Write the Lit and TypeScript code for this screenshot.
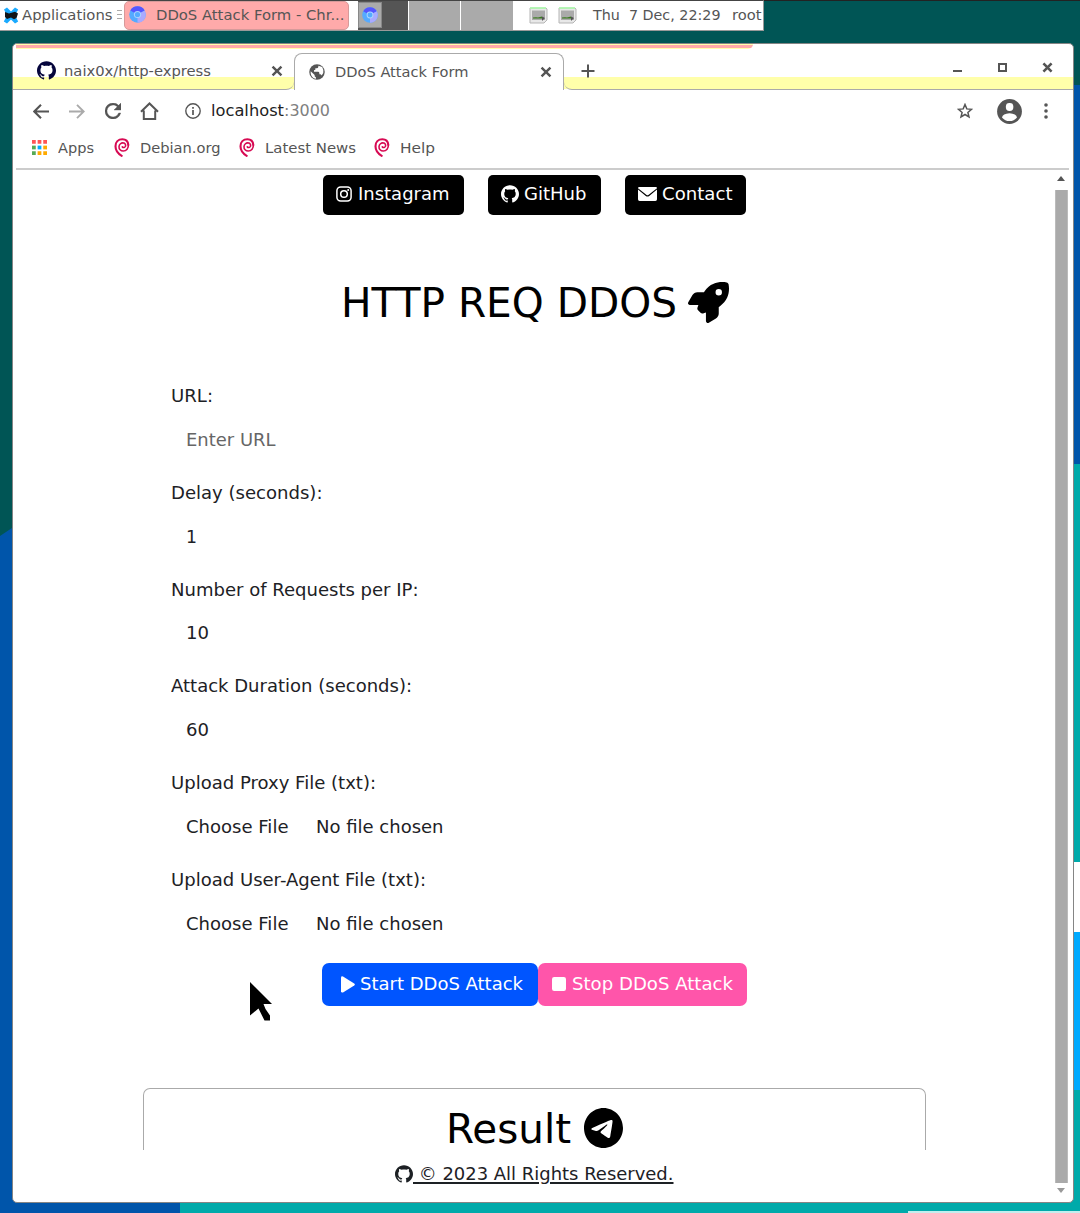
import { LitElement, html, css, svg } from "lit";
import { customElement, property, state } from "lit/decorators.js";

/** A run of text that is stretched horizontally to an exact advance width. */
@customElement("fit-text")
class FitText extends LitElement {
  static styles = css`
    :host { display: block; white-space: pre; }
    .run { display: inline-block; transform-origin: 0 50%; white-space: pre; }
    .underlined { text-decoration: underline; text-decoration-thickness: 1.5px; text-underline-offset: 1.5px; }
  `;
  @property({ type: Number }) w = 0;
  @property() text = "";
  @property({ type: Boolean }) underlined = false;
  @state() private scale = 1;

  firstUpdated() {
    const run = this.renderRoot.querySelector(".run") as HTMLElement;
    const natural = run.getBoundingClientRect().width;
    if (natural > 0 && this.w > 0) this.scale = this.w / natural;
  }

  render() {
    return html`<span class="run ${this.underlined ? "underlined" : ""}" style="transform: scaleX(${this.scale})">${this.text}</span>`;
  }
}

const t = (text: string, w: number, cls = "") => html`<fit-text class=${cls} .text=${text} .w=${w}></fit-text>`;

const GITHUB =
  "M12 .297c-6.63 0-12 5.373-12 12 0 5.303 3.438 9.8 8.205 11.385.6.113.82-.258.82-.577 0-.285-.01-1.04-.015-2.04-3.338.724-4.042-1.61-4.042-1.61C4.422 18.07 3.633 17.7 3.633 17.7c-1.087-.744.084-.729.084-.729 1.205.084 1.838 1.236 1.838 1.236 1.07 1.835 2.809 1.305 3.495.998.108-.776.417-1.305.76-1.605-2.665-.3-5.466-1.332-5.466-5.93 0-1.31.465-2.38 1.235-3.22-.135-.303-.54-1.523.105-3.176 0 0 1.005-.322 3.3 1.23.96-.267 1.98-.399 3-.405 1.02.006 2.04.138 3 .405 2.28-1.552 3.285-1.23 3.285-1.23.645 1.653.24 2.873.12 3.176.765.84 1.23 1.91 1.23 3.22 0 4.61-2.805 5.625-5.475 5.92.42.36.81 1.096.81 2.22 0 1.606-.015 2.896-.015 3.286 0 .315.21.69.825.57C20.565 22.092 24 17.592 24 12.297c0-6.627-5.373-12-12-12";
const ROCKET =
  "M156.6 384.9L125.7 354c-8.5-8.5-11.5-20.8-7.7-32.2c3-8.9 7-20.5 11.8-33.8L24 288c-8.6 0-16.6-4.6-20.9-12.1s-4.2-16.7 .2-24.1l52.5-88.5c13-21.9 36.5-35.3 61.9-35.3l82.3 0c2.4-4 4.8-7.7 7.2-11.3C289.1-4.1 411.1-8.1 483.9 5.3c11.6 2.1 20.6 11.2 22.8 22.8c13.4 72.9 9.3 194.8-111.4 276.7c-3.5 2.4-7.3 4.8-11.3 7.2v82.3c0 25.4-13.4 49-35.3 61.9l-88.5 52.5c-7.4 4.4-16.6 4.5-24.1 .2s-12.1-12.2-12.1-20.9V380.8c-14.1 4.9-26.4 8.9-35.7 11.9c-11.2 3.6-23.4 .5-31.8-7.8zM384 168a40 40 0 1 0 0-80 40 40 0 1 0 0 80z";
const TELEGRAM =
  "M248,8C111.033,8,0,119.033,0,256S111.033,504,248,504,496,392.967,496,256,384.967,8,248,8ZM362.952,176.66c-3.732,39.215-19.881,134.378-28.1,178.3-3.476,18.584-10.322,24.816-16.948,25.425-14.4,1.326-25.338-9.517-39.287-18.661-21.827-14.308-34.158-23.215-55.346-37.177-24.485-16.135-8.612-25,5.342-39.5,3.652-3.793,67.107-61.51,68.335-66.746.153-.655.3-3.1-1.154-4.384s-3.59-.849-5.135-.5q-3.283.746-104.608,69.142-14.845,10.194-26.894,9.934c-8.855-.191-25.888-5.006-38.551-9.123-15.531-5.048-27.875-7.717-26.8-16.291q.84-6.7,18.45-13.7,108.446-47.248,144.628-62.3c68.872-28.647,83.183-33.623,92.511-33.789,2.052-.034,6.639.474,9.61,2.885a10.452,10.452,0,0,1,3.53,6.716A43.765,43.765,0,0,1,362.952,176.66Z";

const icon = (w: number, h: number, viewBox: string, body: unknown) =>
  html`<svg width=${w} height=${h} viewBox=${viewBox} preserveAspectRatio="none">${body}</svg>`;

const github = (s: number) => icon(s, s, "0 0 24 24.3", svg`<path fill="currentColor" d=${GITHUB} />`);

const instagram = icon(16, 16, "0 0 16 16", svg`
  <g fill="none" stroke="currentColor" stroke-width="1.5">
    <rect x=".9" y=".9" width="14.2" height="14.2" rx="3.8" /><circle cx="8" cy="8" r="3.3" />
  </g><circle cx="12.2" cy="3.9" r="1" fill="currentColor" />`);

const envelope = icon(19, 14, "0 0 19 14", svg`
  <path fill="currentColor" d="M1.2 0h16.6Q19 .1 19 1.3L10.4 8q-.9.6-1.8 0L0 1.3Q0 .1 1.2 0z" />
  <path fill="currentColor" d="M0 2.6l7.8 6.4q1.7 1.2 3.400 0L19 2.600v9.700q0 1.7-1.6 1.7H1.6Q0 14 0 12.3z" />`);

const play = icon(14, 17, "0 0 14 17", svg`<path fill="currentColor" d="M0 1.6Q.2-.2 2 .5l11.2 6.9q1.3 1 0 2.1L2 16.4q-1.800.7-2-1.200z" />`);
const stop = icon(14, 14, "0 0 14 14", svg`<rect width="14" height="14" rx="2.2" fill="currentColor" />`);

const debian = icon(16, 19, "0 0 16 19", svg`
  <g fill="none" stroke="#d70a53" stroke-linecap="round">
    <path stroke-width="2.1" d="M14.3 6.800C13.900 3.200 11.600 1.300 8.400 1.300 4.200 1.300 1.500 4.200 1.500 8.300c0 4 2.200 7.200 6.200 9.500" />
    <path stroke-width="1.600" d="M14.300 6.800c.4 3.400-2 6.200-5 6.200-2.600 0-4.500-1.900-4.300-4.400.2-2.400 2.200-4 4.300-3.700 1.800.2 2.700 1.900 2.200 3.300-.5 1.300-2.300 1.700-3.200.7" />
  </g>`);

const chromium = (s: number) => icon(s, s, "0 0 17 17", svg`
  <circle cx="8.5" cy="8.5" r="8.3" fill="#55aaff" />
  <path d="M8.5 8.5L1.3 4.4A8.3 8.3 0 0 1 15.7 4.4z" fill="#5555ff" />
  <path d="M8.5 8.5L15.7 4.4A8.3 8.3 0 0 1 8.5 16.8z" fill="#aaaaff" />
  <circle cx="8.5" cy="8.5" r="3.6" fill="#aad4ff" /><circle cx="8.5" cy="8.5" r="2.6" fill="#55aaff" />`);

const mouseLogo = icon(16, 17, "0 0 16 17", svg`
  <path d="M1 2.500l3-2 4 4 4-4 3.200 2-3.200 6 3.200 6-3.200 2-4-4-4 4-3.200-2 3.200-6z" fill="#19aaff" />
  <path d="M2 5l4 1.400 6-1.600 3 1.700-1.500 4.500-2.500 1.200-3-1.600-4 1.400-2-2z" fill="#101418" />`);

const monitor = icon(19, 17, "0 0 19 17", svg`
  <path d="M1 1h16l1 1v11l-3 3H1z" fill="#e8e8e8" stroke="#b5b5b5" />
  <path d="M1 1h16" stroke="#aaffaa" stroke-width="1.5" />
  <rect x="3" y="3.5" width="13" height="9.500" fill="#aaa" />
  <path d="M4 10.500l3-.3 2 .2 4-1v2.200H4z" fill="#397a1e" /><path d="M13 9.500l3 1.500-3 3z" fill="#555" />`);

const cross = (s: number, sw: number) =>
  icon(s, s, "0 0 10 10", svg`<path d="M1.3 1.3l7.400 7.400M8.700 1.300L1.300 8.700" stroke="#555" stroke-width=${sw} />`);

const plus = icon(14, 14, "0 0 14 14", svg`<path d="M7 .5v13M.5 7h13" stroke="#555" stroke-width="2" />`);
const globe = icon(16, 16, "0 0 24 24", svg`
  <circle cx="12" cy="12" r="11.6" fill="#555" />
  <path fill="#fff" d="M2.5 11l6 5.500v2l2 1.800v1.800C5 21.500 2 17 2.500 11zM14 2.500v2q-.4 2-2.500 2h-2v2.300l-2 .5v2.200h6.500q1.500.4 1.500 2v2h1.600q1.400.3 1.900 1.800Q22.600 13 21.500 9L19.800 4.500z" />`);

const arrow = icon(16, 15, "0 0 16 15", svg`<path d="M16 7.5H1.5M8 .8L1.3 7.5 8 14.2" fill="none" stroke="#555" stroke-width="2.100" />`);
const arrowRight = icon(16, 15, "0 0 16 15", svg`<path d="M0 7.5h14.500M8 .8l6.700 6.700L8 14.2" fill="none" stroke="#aaa" stroke-width="1.9" />`);
const reload = icon(16, 16, "4 4 16 16", svg`<path fill="#555" stroke="#555" stroke-width=".4" d="M17.650 6.350A7.960 7.960 0 0 0 12 4a8 8 0 1 0 7.730 10h-2.080A6 6 0 1 1 12 6c1.660 0 3.140.69 4.220 1.780L13 11h7V4z" />`);
const home = icon(19, 18, "0 0 19 18", svg`<path d="M1 9.800L9.500 1.500 18 9.800M3.800 8.500v8.500h11.400V8.500" fill="none" stroke="#555" stroke-width="2" />`);
const info = icon(16, 16, "0 0 16 16", svg`<circle cx="8" cy="8" r="7.200" fill="none" stroke="#555" stroke-width="1.4" /><path d="M8 7v5M8 4v1.700" stroke="#555" stroke-width="1.700" />`);
const star = icon(16, 16, "0 0 16 16", svg`<path d="M8 1.500l1.800 4.400 4.700.4-3.600 3.100 1.100 4.600L8 11.500 4 14l1.100-4.600L1.500 6.300l4.700-.4z" fill="none" stroke="#555" stroke-width="1.5" />`);
const avatar = icon(25, 25, "0 0 25 25", svg`
  <circle cx="12.500" cy="12.500" r="12.400" fill="#555" />
  <rect x="8.900" y="4" width="7.400" height="8" rx="3.400" fill="#fff" />
  <path d="M5 18.400q.7-3.900 7.500-4.200 6.800.3 7.500 4.200-3 3.700-7.500 3.700T5 18.400z" fill="#fff" />`);
const dots = icon(4, 16, "0 0 4 16", svg`<g fill="#555"><circle cx="2" cy="2" r="1.800" /><circle cx="2" cy="8" r="1.800" /><circle cx="2" cy="14" r="1.800" /></g>`);
const apps = icon(15, 15, "0 0 16 16", svg`
  <g fill="#f55"><rect width="4" height="4" /><rect x="6" width="4" height="4" /><rect x="12" width="4" height="4" /></g>
  <g fill="#5a5"><rect y="6" width="4" height="4" /><rect y="12" width="4" height="4" /></g>
  <rect x="6" y="6" width="4" height="4" fill="#0af" />
  <g fill="#fa0"><rect x="12" y="6" width="4" height="4" /><rect x="6" y="12" width="4" height="4" /><rect x="12" y="12" width="4" height="4" /></g>`);

interface Field {
  label: string;
  labelW: number;
  value: string;
  valueW: number;
  kind: "placeholder" | "value" | "file";
}

const FIELDS: Field[] = [
  { label: "URL:", labelW: 42, value: "Enter URL", valueW: 89.5, kind: "placeholder" },
  { label: "Delay (seconds):", labelW: 151.5, value: "1", valueW: 11, kind: "value" },
  { label: "Number of Requests per IP:", labelW: 247.5, value: "10", valueW: 23, kind: "value" },
  { label: "Attack Duration (seconds):", labelW: 241, value: "60", valueW: 23, kind: "value" },
  { label: "Upload Proxy File (txt):", labelW: 205, value: "", valueW: 0, kind: "file" },
  { label: "Upload User-Agent File (txt):", labelW: 255, value: "", valueW: 0, kind: "file" },
];

@customElement("app-root")
class AppRoot extends LitElement {
  static styles = css`
    :host {
      display: block; position: relative; width: 1080px; height: 1213px; overflow: hidden;
      font-family: "DejaVu Sans", sans-serif; font-size: 16.9px; line-height: 24px; color: #1d2125;
    }
    * { box-sizing: border-box; }
    svg { display: block; flex: none; }
    .wallpaper { position: absolute; inset: 0; }
    .desktop { position: relative; display: flex; flex-direction: column; height: 1213px; }

    .panel {
      display: grid; align-items: center; width: 764px; height: 31px; padding-top: 1px;
      grid-template-columns: 3px 19px 95px 7px 225px 9px 155px 16px 29px 35px 139px 32px;
      background: #fff; border-top: 1px solid #444; border-bottom: 1px solid #999; border-right: 1px solid #999;
      font-size: 14px; line-height: 20px; color: #555;
    }
    .panel > svg { margin-top: -2px; }
    .panel > fit-text { margin-top: -3px; }
    .grip { width: 5px; height: 12px; margin-top: -1px; background: repeating-linear-gradient(#aaa 0 1px, transparent 1px 4px); }
    .task {
      display: flex; align-items: center; gap: 10px; height: 29px; margin-top: -2px; padding: 0 0 1px 4px;
      background: #ffaaaa; border: 1px solid #d69a9a; border-radius: 5px;
    }
    .pager { display: grid; grid-template-columns: 50px 51px 52px; gap: 1px; height: 29px; margin-top: -1px; }
    .desk { background: #aaa; }
    .desk.active { background: #555; padding: 1px 0 1px 0; }
    .mini { width: 24px; height: 26px; display: flex; align-items: center; justify-content: center; background: #aaa; border: 1px solid #888; }

    .window {
      width: 1062px; height: 1160px; margin: 12px 0 0 12px; display: flex; flex-direction: column;
      background: #fff; border: 1px solid #858585; border-radius: 5px; overflow: hidden; position: relative;
    }
    .accent { height: 5px; width: 737px; margin-left: 3px; background: linear-gradient(#ffffaa 0 1px, #ffaaaa 1px 3.500px, #ffffaa 3.500px 5px); border-radius: 0 0 16px 0; flex: none; }
    .tabs {
      display: grid; grid-template-columns: 281px 270px 1fr auto; height: 42px; flex: none;
      background: linear-gradient(#fff 0 28px, #ffffaa 28px 40px, transparent 40px);
      font-size: 13.9px; line-height: 20px; color: #555;
    }
    .tab { display: grid; align-items: center; }
    .tab.idle {
      grid-template-columns: 27px 207px 1fr; padding: 3px 0 0 24px; height: 41px;
      border-bottom: 1px solid #aaa; border-bottom-right-radius: 8px;
    }
    .tab.idle svg { color: #05053c; }
    .tab.current {
      grid-template-columns: 25.500px 205.500px 1fr; padding: 0 0 1px 14px; height: 37px; margin-top: 4px; background: #fff;
      border: 1px solid #aaa; border-bottom: 0; border-radius: 8px 8px 0 0;
    }
    .rest { display: flex; align-items: center; padding-left: 17px; height: 41px; padding-top: 3px; border-bottom: 1px solid #aaa; border-bottom-left-radius: 8px; }
    .controls { display: grid; grid-template-columns: 45px 44.500px 31px; align-items: center; height: 41px; padding-bottom: 3px; border-bottom: 1px solid #aaa; }
    .min { width: 9px; height: 2px; margin-top: 7px; background: #555; }
    .max { width: 9px; height: 9px; border: 2px solid #555; }

    .toolbar {
      display: grid; align-items: center; height: 40px; flex: none; padding-left: 19.500px;
      grid-template-columns: 36px 36px 35px 45.500px 25.500px 73px 1fr 40.500px 46.500px 29.500px;
      font-size: 15.3px; line-height: 20px; color: #222;
    }
    .dim { color: #808080; }
    .bookmarks {
      display: grid; align-items: center; height: 39px; flex: none; padding: 0 0 4px 16px; margin: 0 4px 0 3px;
      grid-template-columns: 26px 56px 25.500px 99px 26px 109px 26.500px 1fr;
      border-bottom: 2px solid #ccc;
      font-size: 13.9px; line-height: 20px; color: #555;
    }

    .view { display: grid; grid-template-columns: 1fr 14px; flex: 1; padding-right: 5px; min-height: 0; }
    .page { display: flex; flex-direction: column; min-width: 0; }
    .links { display: grid; grid-template-columns: 141px 113px 121px; gap: 24px; padding: 4.500px 0 0 310px; }
    .link { display: grid; grid-template-columns: 21.500px 1fr; align-items: center; height: 40.500px; padding: 0 0 1px 13px; background: #000; color: #fff; border-radius: 5px; }
    .link.git { grid-template-columns: 23px 1fr; }
    .link.mail { grid-template-columns: 23.500px 1fr; }
    .title { display: grid; grid-template-columns: 347px 42px; align-items: center; height: 50px; margin: 62px 0 0 328px; font-size: 40.500px; line-height: 50px; color: #000; }
    .title fit-text { padding-top: 1px; }
    .form { padding: 57px 0 0 158px; }
    .field { height: 96.750px; }
    .input { display: grid; grid-template-columns: 130.500px 1fr; margin-top: 19.750px; padding-left: 14.500px; }
    .placeholder { color: #666; }
    .actions { display: grid; grid-template-columns: 216.500px 209px; padding-left: 308.500px; margin-top: -1.500px; }
    .action { display: grid; grid-template-columns: 19.500px 1fr; align-items: center; height: 43px; border-radius: 7px; padding: 0 0 1px 19px; color: #fff; }
    .go { background: #0055ff; }
    .halt { background: #ff55aa; padding-left: 14px; }
    .result {
      display: grid; grid-template-columns: 138px 40px; align-items: start; width: 783px; height: 62px; margin: 82px 0 0 130px; padding: 16px 0 0 302px;
      border: 1px solid #aaa; border-bottom: 0; border-radius: 7px 7px 0 0; font-size: 40px; line-height: 48px; color: #000;
    }
    .result svg { margin-top: 3px; }
    .foot { display: flex; align-items: center; height: 46px; padding: 2px 0 0 382px; }
    .scroll { display: flex; flex-direction: column; align-items: center; padding: 6px 0 9px; }
    .thumb { flex: 1; width: 13px; margin: 9px 0 5px; background: #aaa; border: 1px solid #bbb; border-width: 0 1px; }
    .up, .down { border: 4px solid transparent; border-top: 0; border-bottom: 5px solid #555; }
    .down { border-top: 5px solid #999; border-bottom: 0; }
    .pointer { position: absolute; left: 248px; top: 980px; }
  `;

  private renderField(f: Field) {
    return html`<div class="field">
      ${t(f.label, f.labelW)}
      <div class="input">
        ${f.kind === "file"
          ? html`${t("Choose File", 102.5)}${t("No file chosen", 127.5)}`
          : t(f.value, f.valueW, f.kind)}
      </div>
    </div>`;
  }

  render() {
    return html`
      <svg class="wallpaper" width="1080" height="1213" viewBox="0 0 1080 1213">
        <rect width="1080" height="1213" fill="#005555" />
        <rect width="1080" height="1" fill="#222" />
        <path d="M0 536L30 516V1213H0z" fill="#0055aa" />
        <rect x="1060" y="85" width="20" height="380" fill="#0055aa" />
        <rect x="1060" y="464" width="20" height="400" fill="#00aaaa" />
        <rect x="1060" y="862" width="20" height="71" fill="#fff" />
        <rect x="1060" y="932" width="20" height="160" fill="#00aaff" />
        <rect x="1060" y="1090" width="20" height="123" fill="#00aaaa" />
        <rect y="1190" width="180" height="23" fill="#0055aa" />
        <rect x="180" y="1190" width="900" height="23" fill="#00aaaa" />
        <rect x="908" y="1211" width="172" height="2" fill="#c4eeee" />
      </svg>
      <div class="desktop">
        <div class="panel">
          <span></span>${mouseLogo}${t("Applications", 90.5)}<span class="grip"></span>
          <div class="task">${chromium(17)}${t("DDoS Attack Form - Chr...", 188.5)}</div>
          <span></span>
          <div class="pager">
            <div class="desk active"><div class="mini">${chromium(16)}</div></div>
            <div class="desk"></div><div class="desk"></div>
          </div>
          <span></span>${monitor}${monitor}${t("Thu  7 Dec, 22:29", 127.5)}${t("root", 29.5)}
        </div>
        <div class="window">
          <div class="accent"></div>
          <div class="tabs">
            <div class="tab idle">${github(19)}${t("naix0x/http-express", 147)}<span>${cross(12, 2)}</span></div>
            <div class="tab current">${globe}${t("DDoS Attack Form", 133.5)}<span>${cross(12, 2)}</span></div>
            <div class="rest">${plus}</div>
            <div class="controls"><span class="min"></span><span class="max"></span>${cross(11, 2.4)}</div>
          </div>
          <div class="toolbar">
            ${arrow}${arrowRight}${reload}${home}${info}${t("localhost", 73)}${t(":3000", 46, "dim")}${star}${avatar}${dots}
          </div>
          <div class="bookmarks">
            ${apps}${t("Apps", 36)}${debian}${t("Debian.org", 80.5)}${debian}${t("Latest News", 91)}${debian}${t("Help", 35)}
          </div>
          <div class="view">
            <div class="page">
              <div class="links">
                <div class="link">${instagram}${t("Instagram", 91.5)}</div>
                <div class="link git">${github(18)}${t("GitHub", 62.5)}</div>
                <div class="link mail">${envelope}${t("Contact", 70.5)}</div>
              </div>
              <div class="title">${t("HTTP REQ DDOS", 336)}${icon(41, 41, "0 0 512 512", svg`<path fill="currentColor" d=${ROCKET} />`)}</div>
              <div class="form">${FIELDS.map((f) => this.renderField(f))}</div>
              <div class="actions">
                <div class="action go">${play}${t("Start DDoS Attack", 163)}</div>
                <div class="action halt">${stop}${t("Stop DDoS Attack", 161)}</div>
              </div>
              <div class="result">${t("Result", 125)}${icon(39, 40, "0 8 496 496", svg`<path fill="currentColor" d=${TELEGRAM} />`)}</div>
              <div class="foot">${github(18)}<fit-text underlined .text=${" © 2023 All Rights Reserved."} .w=${260.5}></fit-text></div>
            </div>
            <div class="scroll"><span class="up"></span><span class="thumb"></span><span class="down"></span></div>
          </div>
        </div>
      </div>
      <svg class="pointer" width="26" height="44" viewBox="0 0 26 44">
        <path d="M2 2L24 24H15.500L17.500 29L22 35.500V40.500H16.500L10.500 28.500L2 35.500z" fill="#000" />
      </svg>
    `;
  }
}
